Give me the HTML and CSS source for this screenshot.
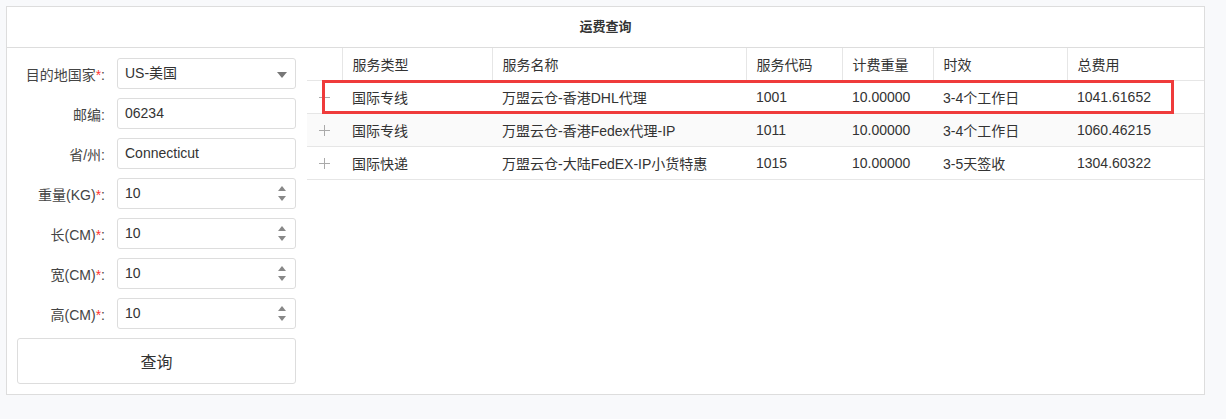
FILE: index.html
```html
<!DOCTYPE html>
<html lang="zh-CN">
<head>
    <meta charset="UTF-8">
    <title>运费查询</title>
    <link rel="stylesheet" href="styles.css">
</head>
<body>
    <div class="panel">
        <div class="panel-head">运费查询</div>
        <div class="panel-body">
            <!-- 查询条件 -->
            <form class="query-form">
                <div class="row">
                    <label>目的地国家<em>*</em>:</label>
                    <div class="field select">US-美国<span class="caret"></span></div>
                </div>
                <div class="row">
                    <label>邮编:</label>
                    <div class="field">06234</div>
                </div>
                <div class="row">
                    <label>省/州:</label>
                    <div class="field">Connecticut</div>
                </div>
                <div class="row">
                    <label>重量(KG)<em>*</em>:</label>
                    <div class="field number">10<span class="spin"><i class="up"></i><i class="down"></i></span></div>
                </div>
                <div class="row">
                    <label>长(CM)<em>*</em>:</label>
                    <div class="field number">10<span class="spin"><i class="up"></i><i class="down"></i></span></div>
                </div>
                <div class="row">
                    <label>宽(CM)<em>*</em>:</label>
                    <div class="field number">10<span class="spin"><i class="up"></i><i class="down"></i></span></div>
                </div>
                <div class="row">
                    <label>高(CM)<em>*</em>:</label>
                    <div class="field number">10<span class="spin"><i class="up"></i><i class="down"></i></span></div>
                </div>
                <button type="button" class="btn-query">查询</button>
            </form>

            <!-- 结果列表 -->
            <div class="result">
                <table class="grid">
                    <colgroup>
                        <col style="width:35px">
                        <col style="width:150px">
                        <col style="width:254px">
                        <col style="width:96px">
                        <col style="width:91px">
                        <col style="width:134px">
                        <col>
                    </colgroup>
                    <thead>
                        <tr>
                            <th></th>
                            <th>服务类型</th>
                            <th>服务名称</th>
                            <th>服务代码</th>
                            <th>计费重量</th>
                            <th>时效</th>
                            <th>总费用</th>
                        </tr>
                    </thead>
                    <tbody>
                        <tr>
                            <td class="expand"><svg width="11" height="11" viewBox="0 0 11 11"><path d="M5.5 0v11M0 5.5h11" stroke="#aaa" stroke-width="1"/></svg></td>
                            <td>国际专线</td>
                            <td>万盟云仓-香港DHL代理</td>
                            <td>1001</td>
                            <td>10.00000</td>
                            <td>3-4个工作日</td>
                            <td>1041.61652</td>
                        </tr>
                        <tr class="alt">
                            <td class="expand"><svg width="11" height="11" viewBox="0 0 11 11"><path d="M5.5 0v11M0 5.5h11" stroke="#aaa" stroke-width="1"/></svg></td>
                            <td>国际专线</td>
                            <td>万盟云仓-香港Fedex代理-IP</td>
                            <td>1011</td>
                            <td>10.00000</td>
                            <td>3-4个工作日</td>
                            <td>1060.46215</td>
                        </tr>
                        <tr>
                            <td class="expand"><svg width="11" height="11" viewBox="0 0 11 11"><path d="M5.5 0v11M0 5.5h11" stroke="#aaa" stroke-width="1"/></svg></td>
                            <td>国际快递</td>
                            <td>万盟云仓-大陆FedEX-IP小货特惠</td>
                            <td>1015</td>
                            <td>10.00000</td>
                            <td>3-5天签收</td>
                            <td>1304.60322</td>
                        </tr>
                    </tbody>
                </table>
                <div class="mark"></div>
            </div>
        </div>
    </div>
</body>
</html>
```

FILE: styles.css
```css
body {
    margin: 0;
    padding: 6px 0 0 6px;
    background: #f8f9fb;
    font-family: "Liberation Sans", "Noto Sans CJK SC", sans-serif;
    font-size: 14px;
    color: #333;
}
.panel {
    width: 1197px;
    background: #fff;
    border: 1px solid #ddd;
}
.panel-head {
    height: 40px;
    line-height: 40px;
    text-align: center;
    font-size: 13px;
    font-weight: bold;
    border-bottom: 1px solid #ddd;
}
.panel-body {
    display: flex;
    align-items: flex-start;
}
.query-form {
    width: 279px;
    padding: 10px 11px 10px 10px;
    margin: 0;
}
.row {
    display: flex;
    align-items: center;
    height: 31px;
    margin-bottom: 9px;
}
.row label {
    width: 88px;
    margin-right: 12px;
    text-align: right;
    color: #444;
}
.row label em {
    font-style: normal;
    color: #f33;
}
.field {
    position: relative;
    box-sizing: border-box;
    width: 179px;
    height: 31px;
    line-height: 29px;
    padding: 0 7px;
    border: 1px solid #ddd;
    border-radius: 3px;
    color: #333;
}
.caret {
    position: absolute;
    right: 8px;
    top: 13px;
    border-left: 5px solid transparent;
    border-right: 5px solid transparent;
    border-top: 6px solid #777;
}
.spin {
    position: absolute;
    right: 9px;
    top: 7px;
    width: 8px;
    height: 16px;
}
.spin i {
    position: absolute;
    left: 0;
    border-left: 4px solid transparent;
    border-right: 4px solid transparent;
}
.spin .up {
    top: 0;
    border-bottom: 5px solid #888;
}
.spin .down {
    bottom: 1px;
    border-top: 5px solid #888;
}
.btn-query {
    display: block;
    width: 279px;
    height: 46px;
    background: #fff;
    border: 1px solid #ddd;
    border-radius: 3px;
    font-family: inherit;
    font-size: 16px;
    color: #333;
}
.result {
    position: relative;
    flex: 1;
}
.grid {
    width: 100%;
    border-collapse: collapse;
    table-layout: fixed;
}
.grid th,
.grid td {
    height: 32px;
    padding: 0 10px;
    text-align: left;
    font-weight: normal;
    border-bottom: 1px solid #e6e6e6;
    white-space: nowrap;
}
.grid th + th {
    border-left: 1px solid #e6e6e6;
}
.grid td.expand {
    padding: 0 0 0 12px;
}
.grid td.expand svg {
    display: block;
}
.grid tr.alt td {
    background: #fafafa;
}
.mark {
    position: absolute;
    left: 15px;
    top: 32px;
    width: 846px;
    height: 28px;
    border: 3px solid #ef3b3b;
}
```
